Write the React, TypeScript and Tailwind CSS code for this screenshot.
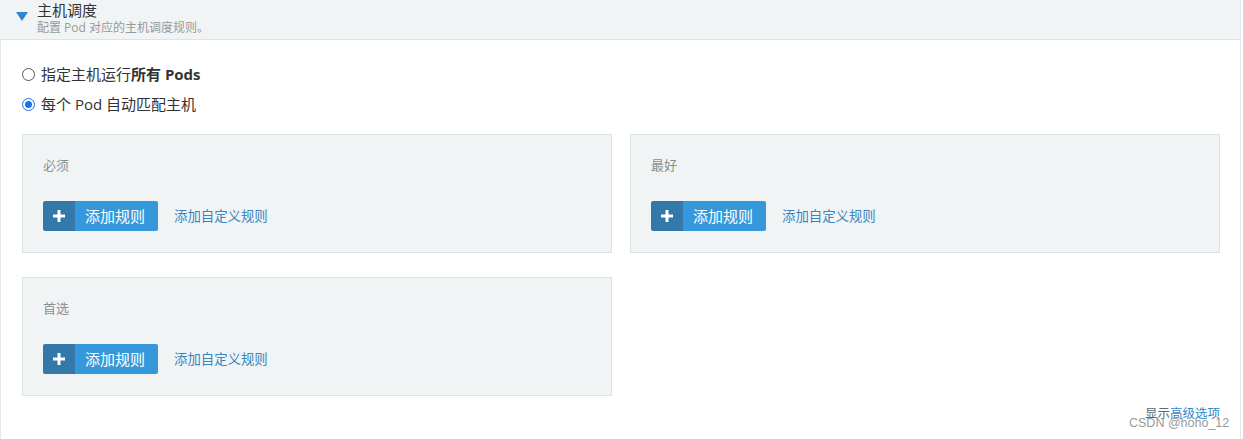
import React from 'react';

const font = { fontFamily: '"Open Sans", "Noto Sans CJK SC", sans-serif' };

const RuleCard: React.FC<{ label: string }> = ({ label }) => (
  <div className="h-[119px] border border-[#dce3e6] bg-[#f1f4f5] px-5 pt-[22px]">
    <div className="text-[13px] leading-[16px] text-[#8a8f92]">{label}</div>
    <div className="mt-[28px] flex items-center">
      <button className="flex h-[30px] items-stretch rounded-[2px] overflow-hidden text-white">
        <span className="flex w-[32px] items-center justify-center bg-[#3279a9]">
          <svg width="12" height="12" viewBox="0 0 12 12">
            <path d="M4.5 0h3v4.5H12v3H7.5V12h-3V7.5H0v-3h4.5z" fill="#fff" />
          </svg>
        </span>
        <span className="flex items-center bg-[#3598db] pl-[10px] pr-[13px] text-[15px]">添加规则</span>
      </button>
      <a className="ml-[16px] text-[13.4px] text-[#3a84bf]">添加自定义规则</a>
    </div>
  </div>
);

export default function App() {
  return (
    <div className="relative h-[439px] w-[1243px] bg-white" style={font}>
      <div className="h-[439px] w-[1241px] border-r border-[#e4e8ea]">
        {/* header */}
        <div className="flex h-[40px] items-start border-b border-[#dde3e6] bg-[#f1f4f5] pl-[16px]">
          <svg className="mt-[12px]" width="12" height="9" viewBox="0 0 12 9">
            <path d="M0 0h12L6 9z" fill="#2f86cc" />
          </svg>
          <div className="ml-[9px]">
            <div className="text-[15px] leading-[20px] text-[#333]">主机调度</div>
            <div className="text-[12px] leading-[15px] text-[#999]">配置 Pod 对应的主机调度规则。</div>
          </div>
        </div>

        <div className="h-[399px] border-l border-[#e4e8ea] pl-[21px] pr-[20px]">
          {/* radios */}
          <div className="pt-[24px]">
            <label className="flex h-[20px] items-center text-[15px] text-[#333]">
              <span className="h-[13px] w-[13px] rounded-full border border-[#555] bg-white" />
              <span className="ml-[6px]">指定主机运行<b className="font-bold">所有 Pods</b></span>
            </label>
            <label className="mt-[10px] flex h-[20px] items-center text-[15px] text-[#333]">
              <span className="flex h-[13px] w-[13px] items-center justify-center rounded-full border border-[#1a73e8] bg-white">
                <span className="h-[7px] w-[7px] rounded-full bg-[#1a73e8]" />
              </span>
              <span className="ml-[6px]">每个 Pod 自动匹配主机</span>
            </label>
          </div>

          {/* rule cards */}
          <div className="mt-[20px] grid grid-cols-[590px_590px] gap-x-[18px] gap-y-[24px]">
            <RuleCard label="必须" />
            <RuleCard label="最好" />
            <RuleCard label="首选" />
          </div>

          <div className="mt-[9px] flex justify-end text-[12.5px]">
            <span className="text-[#5a6a78]">显示</span>
            <span className="text-[#2f86cc]">高级选项</span>
          </div>
        </div>
      </div>

      {/* watermark */}
      <div
        className="absolute left-[1129px] top-[414px] text-[12.5px] text-[#9a9a9a]"
        style={{ fontFamily: '"Liberation Sans", sans-serif' }}
      >
        CSDN @hoho_12
      </div>
    </div>
  );
}
